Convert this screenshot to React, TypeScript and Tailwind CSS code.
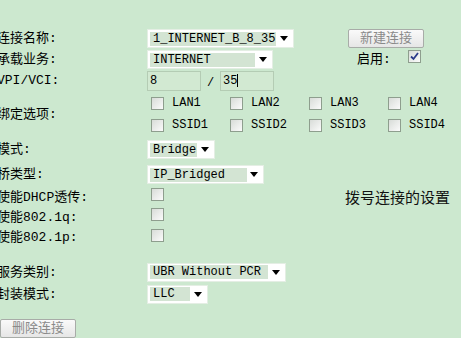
import React from 'react'

const FONT = { fontFamily: '"Liberation Mono", "Noto Sans CJK SC", monospace' }

function Arrow() {
  return (
    <svg width="8" height="5" viewBox="0 0 8 5" className="shrink-0">
      <path d="M0 0 H8 L4 5 Z" fill="#000" />
    </svg>
  )
}

function Select({ value, width, textWidth }: { value: string; width: number; textWidth: number }) {
  return (
    <div
      className="flex items-center h-[19px] bg-white border border-[#e4eee4] px-[2px]"
      style={{ width }}
    >
      <span
        className="h-[14px] flex items-center bg-[#d3e4d3] px-[3px] text-[12px] leading-none text-black whitespace-nowrap"
        style={{ width: textWidth }}
      >
        {value}
      </span>
      <div className="flex-1 flex justify-center">
        <Arrow />
      </div>
    </div>
  )
}

function Box({ checked }: { checked?: boolean }) {
  return (
    <span className="inline-flex items-center justify-center w-[13px] h-[13px] border border-[#8e9e8e] bg-gradient-to-br from-[#d8dcd8] to-[#fbfbfb] shrink-0">
      {checked && (
        <svg width="9" height="9" viewBox="0 0 9 9">
          <path d="M1 4.5 L3.5 7 L8 1" stroke="#2a3a8a" strokeWidth="1.8" fill="none" />
        </svg>
      )}
    </span>
  )
}

function Opt({ label }: { label: string }) {
  return (
    <div className="flex items-center gap-[8px] w-[79px] pl-[4px]">
      <Box />
      <span className="text-[12px] leading-none text-black">{label}</span>
    </div>
  )
}

function Label({ children }: { children: React.ReactNode }) {
  return <div className="w-[150px] shrink-0 ml-[-3px] text-[13px] leading-none text-black whitespace-nowrap">{children}</div>
}

function Btn({ children }: { children: React.ReactNode }) {
  return (
    <button className="h-[19px] w-[76px] flex items-center justify-center border border-[#a8aca8] rounded-[2px] bg-gradient-to-b from-[#fafafa] to-[#e6e6e6] text-[13px] text-[#8a8a8a] leading-none">
      {children}
    </button>
  )
}

export default function App() {
  return (
    <div className="w-[461px] h-[338px] bg-[#cce8cf] overflow-hidden pt-[28px]" style={FONT}>
      <div className="flex items-center h-[21px]">
        <Label>连接名称:</Label>
        <div className="w-[201px]">
          <Select value="1_INTERNET_B_8_35" width={147} textWidth={126} />
        </div>
        <Btn>新建连接</Btn>
      </div>
      <div className="flex items-center h-[21px]">
        <Label>承载业务:</Label>
        <div className="w-[210px]">
          <Select value="INTERNET" width={126} textWidth={105} />
        </div>
        <span className="text-[13px] leading-none">启用:</span>
        <span className="ml-[17px] mt-[-6px]"><Box checked /></span>
      </div>
      <div className="flex items-center h-[21px]">
        <Label>VPI/VCI:</Label>
        <div className="flex items-center text-[12px] leading-none">
          <div className="w-[54px] h-[20px] border border-[#b4ccb4] bg-[#d2e9d2] flex items-center px-[2px]">8</div>
          <span className="w-[19px] text-center pt-[4px]">/</span>
          <div className="w-[54px] h-[20px] border border-[#b4ccb4] bg-[#d2e9d2] flex items-center px-[2px]">
            35<span className="inline-block w-[1px] h-[13px] bg-black" />
          </div>
        </div>
      </div>
      <div className="flex items-center h-[46px]">
        <Label>绑定选项:</Label>
        <div className="flex flex-col">
          <div className="flex items-center h-[22px]">
            <Opt label="LAN1" />
            <Opt label="LAN2" />
            <Opt label="LAN3" />
            <Opt label="LAN4" />
          </div>
          <div className="flex items-center h-[22px]">
            <Opt label="SSID1" />
            <Opt label="SSID2" />
            <Opt label="SSID3" />
            <Opt label="SSID4" />
          </div>
        </div>
      </div>
      <div className="flex">
        <div className="flex flex-col w-[264px]">
          <div className="flex items-center h-[25px]">
            <Label>模式:</Label>
            <Select value="Bridge" width={68} textWidth={47} />
          </div>
          <div className="flex items-center h-[25px]">
            <Label>桥类型:</Label>
            <Select value="IP_Bridged" width={117} textWidth={97} />
          </div>
          <div className="flex items-center h-[20px]">
            <Label>使能DHCP透传:</Label>
            <span className="pl-[4px]"><Box /></span>
          </div>
          <div className="flex items-center h-[20px]">
            <Label>使能802.1q:</Label>
            <span className="pl-[4px]"><Box /></span>
          </div>
          <div className="flex items-center h-[21px]">
            <Label>使能802.1p:</Label>
            <span className="pl-[4px]"><Box /></span>
          </div>
        </div>
        <div className="flex items-center pl-[81px] pt-[8px] text-[15px] leading-none text-[#111] whitespace-nowrap" style={{ fontFamily: '"Noto Sans CJK SC", sans-serif' }}>
          拨号连接的设置
        </div>
      </div>
      <div className="h-[13px]" />
      <div className="flex items-center h-[22px]">
        <Label>服务类别:</Label>
        <Select value="UBR Without PCR" width={139} textWidth={118} />
      </div>
      <div className="flex items-center h-[22px]">
        <Label>封装模式:</Label>
        <Select value="LLC" width={61} textWidth={40} />
      </div>
      <div className="h-[14px]" />
      <Btn>删除连接</Btn>
    </div>
  )
}
